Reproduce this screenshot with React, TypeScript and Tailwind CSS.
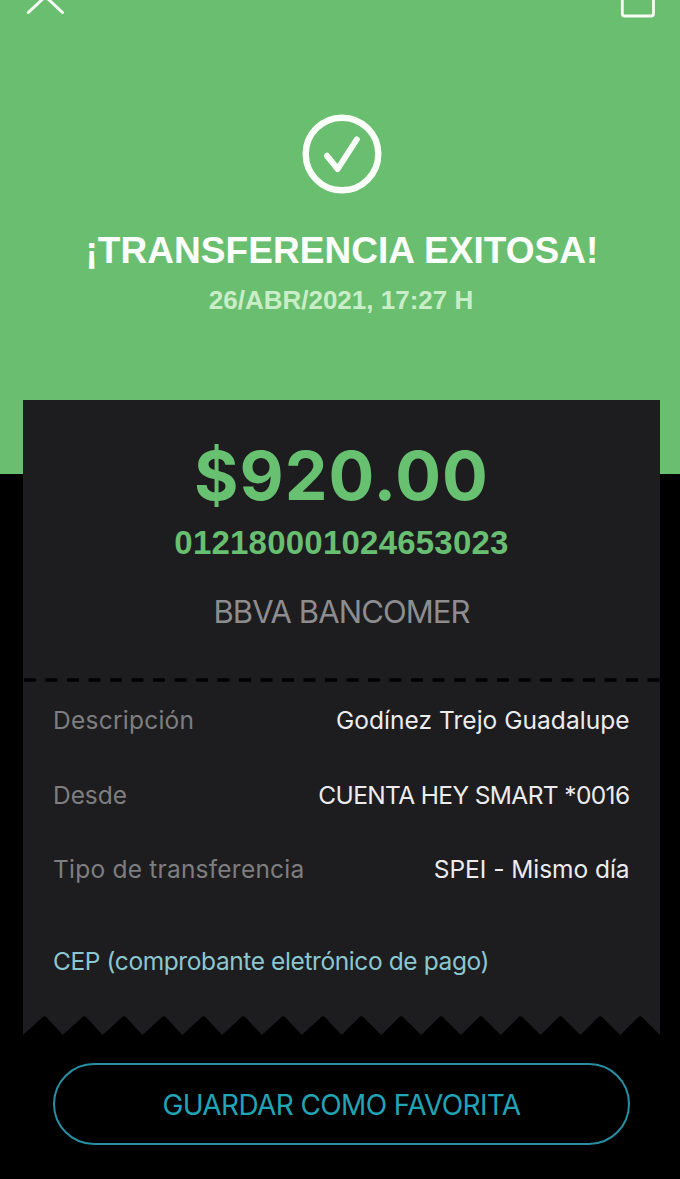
const ROWS = [
  { label: "Descripción", value: "Godínez Trejo Guadalupe", labelSpacing: "tracking-[0.25px]", valueSpacing: "tracking-[0.03px]" },
  { label: "Desde", value: "CUENTA HEY SMART *0016", labelSpacing: "tracking-[-0.05px]", valueSpacing: "tracking-[-0.62px]" },
  { label: "Tipo de transferencia", value: "SPEI - Mismo día", labelSpacing: "tracking-[0.22px]", valueSpacing: "tracking-[-0.05px]" },
];

const TEETH = 16;
const TOOTH = 637 / TEETH;

function tornEdge() {
  let d = "M0 0H637V19";
  for (let i = TEETH - 1; i >= 0; i--) {
    const x = i * TOOTH;
    const mid = x + TOOTH / 2 + (i < 8 ? 1.5 : 0);
    d += `L${mid + 2} 1.2Q${mid} -0.6 ${mid - 2} 1.2L${x} 19`;
  }
  return d + "Z";
}

function Header() {
  return (
    <header className="flex h-[474px] flex-col items-center bg-[#69be70]">
      <div className="flex h-5 w-full items-start justify-between pl-[26px] pr-6">
        <svg width="40" height="20" viewBox="0 0 40 20" fill="none" stroke="#f7fff5" strokeWidth="3" strokeLinecap="round">
          <path d="M2.3 12.5L19.4 -3.5L36.5 12.5" />
        </svg>
        <svg width="36" height="20" viewBox="0 0 36 20" fill="none" stroke="#f7fff5" strokeWidth="2.8">
          <path d="M2.3 -3V13.5Q2.3 16 4.8 16H31Q33.5 16 33.5 13.5V-3" />
        </svg>
      </div>
      <svg className="ml-1 mt-[92.5px]" width="82" height="82" viewBox="0 0 82 82" fill="none" stroke="#fbfffa" strokeLinecap="round" strokeLinejoin="round">
        <circle cx="41" cy="41" r="36.3" strokeWidth="6.4" />
        <path d="M26 42.8L36.7 56L55.7 26.5" strokeWidth="6" />
      </svg>
      <h1 className="ml-1 mt-[33px] whitespace-nowrap text-[37px] font-bold leading-[46px] tracking-[0.05px] text-[#fcfffb]">
        ¡TRANSFERENCIA EXITOSA!
      </h1>
      <p className="ml-0.5 mt-[11px] whitespace-nowrap text-[26px] font-bold leading-[30px] text-[#c9eec7]">
        26/ABR/2021, 17:27 H
      </p>
    </header>
  );
}

function Receipt() {
  return (
    <section className="relative -mt-[74px] ml-[23px] flex w-[637px] flex-col">
      <div className="flex h-[616px] flex-col bg-[#1d1d1f]">
        <div className="flex h-[278px] flex-col items-center">
          <div className="mt-[35px] whitespace-nowrap font-['Inter',sans-serif] text-[68px] font-bold leading-[80px] tracking-[1px] text-[#68c071]">
            $920.00
          </div>
          <div className="mt-[10px] whitespace-nowrap text-[33px] font-bold leading-9 tracking-[0.22px] text-[#68bf71]">
            012180001024653023
          </div>
          <div className="mt-[31px] whitespace-nowrap font-['Inter',sans-serif] text-[31px] font-normal leading-10 tracking-[-0.9px] text-[#8d8d90]">
            BBVA BANCOMER
          </div>
        </div>
        <svg width="637" height="4" viewBox="0 0 637 4">
          <path d="M1 2H637" stroke="#020202" strokeWidth="3.6" strokeDasharray="12 9.5" />
        </svg>
        <dl className="flex flex-col pl-[30px] pr-[30.5px] pt-[1px] font-['Inter',sans-serif] text-[24.5px] leading-[74.5px]">
          {ROWS.map((row) => (
            <div key={row.label} className="flex h-[74.5px] items-center justify-between whitespace-nowrap">
              <dt className={`text-[#7e7e80] ${row.labelSpacing}`}>{row.label}</dt>
              <dd className={`text-[#ececee] ${row.valueSpacing}`}>{row.value}</dd>
            </div>
          ))}
        </dl>
        <a href="#" className="ml-[30px] mt-[34px] self-start whitespace-nowrap font-['Inter',sans-serif] text-[24.5px] leading-[40px] tracking-[-0.4px] text-[#8bc7d0]">
          CEP (comprobante eletrónico de pago)
        </a>
      </div>
      <svg width="637" height="19" viewBox="0 0 637 19" fill="#1d1d1f">
        <path d={tornEdge()} />
      </svg>
    </section>
  );
}

export default function App() {
  return (
    <main className="flex h-[1179px] w-[680px] flex-col overflow-hidden bg-black font-['Liberation_Sans',sans-serif]">
      <Header />
      <Receipt />
      <button className="ml-[53px] mt-7 flex h-[82px] w-[577px] items-center justify-center whitespace-nowrap rounded-full border-2 border-[#278fa1] pt-0.5 font-['Inter',sans-serif] text-[28px] tracking-[-0.62px] text-[#20a4b6]">
        GUARDAR COMO FAVORITA
      </button>
    </main>
  );
}
